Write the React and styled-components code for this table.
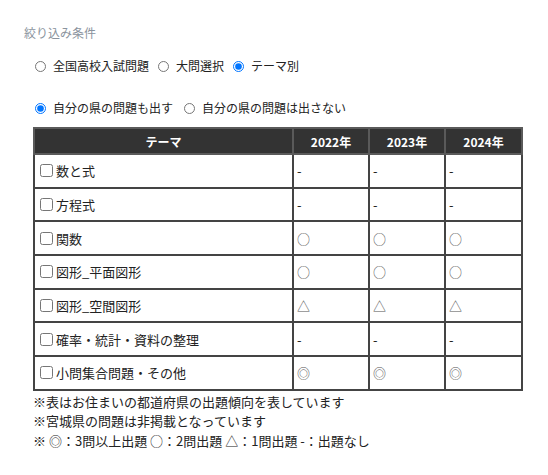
import React from 'react'
import styled, { createGlobalStyle } from 'styled-components'

const GlobalStyle = createGlobalStyle`
  body {
    margin: 0;
    background: #fff;
    font-family: "Noto Sans CJK JP", "Noto Sans", sans-serif;
    color: #222;
  }
`

const Page = styled.div`
  padding: 24px 0 0 24px;
  width: 524px;
`

const Heading = styled.div`
  font-size: 12px;
  line-height: 18px;
  color: #8a939d;
`

const RadioRow = styled.div`
  display: flex;
  align-items: center;
  margin-top: ${(p) => p.$top}px;
  padding-left: 5px;
  font-size: 12px;
  line-height: 18px;
`

const RadioLabel = styled.label`
  display: flex;
  align-items: center;
  margin-right: ${(p) => p.$gap || 3}px;

  input {
    margin: 0 7px 0 6px;
    width: 11px;
    height: 11px;
  }
`

const Table = styled.table`
  margin: 10px 0 0 9px;
  width: 488px;
  border-collapse: collapse;
  table-layout: fixed;
  font-size: 13px;
`

const Th = styled.th`
  background: #333;
  color: #fff;
  font-weight: bold;
  font-size: 12px;
  height: 24px;
  padding: 0;
  border: 2px solid #5a5a5a;
  text-align: center;
`

const Td = styled.td`
  border: 2px solid #444;
  height: 31.7px;
  padding: 0 ${(p) => (p.$theme ? 1 : 3)}px;
  vertical-align: middle;
  color: ${(p) => (p.$mark ? '#555' : '#222')};
`

const Theme = styled.label`
  display: flex;
  align-items: center;

  input {
    margin: 0 3px 0 4px;
    width: 13px;
    height: 13px;
  }
`

const Notes = styled.div`
  margin-left: 9px;
  padding-top: 1px;
  font-size: 13px;
  line-height: 19.5px;
`

const rows = [
  ['数と式', '-', '-', '-'],
  ['方程式', '-', '-', '-'],
  ['関数', '○', '○', '○'],
  ['図形_平面図形', '○', '○', '○'],
  ['図形_空間図形', '△', '△', '△'],
  ['確率・統計・資料の整理', '-', '-', '-'],
  ['小問集合問題・その他', '◎', '◎', '◎'],
]

export default function App() {
  return (
    <Page>
      <GlobalStyle />
      <Heading>絞り込み条件</Heading>
      <RadioRow $top={15}>
        <RadioLabel>
          <input type="radio" name="mode" />
          全国高校入試問題
        </RadioLabel>
        <RadioLabel>
          <input type="radio" name="mode" />
          大問選択
        </RadioLabel>
        <RadioLabel>
          <input type="radio" name="mode" defaultChecked />
          テーマ別
        </RadioLabel>
      </RadioRow>
      <RadioRow $top={24}>
        <RadioLabel $gap={5}>
          <input type="radio" name="pref" defaultChecked />
          自分の県の問題も出す
        </RadioLabel>
        <RadioLabel>
          <input type="radio" name="pref" />
          自分の県の問題は出さない
        </RadioLabel>
      </RadioRow>
      <Table>
        <colgroup>
          <col style={{ width: 259 }} />
          <col style={{ width: 76 }} />
          <col style={{ width: 76 }} />
          <col style={{ width: 77 }} />
        </colgroup>
        <thead>
          <tr>
            <Th>テーマ</Th>
            <Th>2022年</Th>
            <Th>2023年</Th>
            <Th>2024年</Th>
          </tr>
        </thead>
        <tbody>
          {rows.map(([name, ...marks]) => (
            <tr key={name}>
              <Td $theme>
                <Theme>
                  <input type="checkbox" />
                  {name}
                </Theme>
              </Td>
              {marks.map((m, i) => (
                <Td key={i} $mark={m !== '-'}>{m}</Td>
              ))}
            </tr>
          ))}
        </tbody>
      </Table>
      <Notes>
        <div>※表はお住まいの都道府県の出題傾向を表しています</div>
        <div>※宮城県の問題は非掲載となっています</div>
        <div>※ ◎：3問以上出題 ○：2問出題 △：1問出題 -：出題なし</div>
      </Notes>
    </Page>
  )
}
